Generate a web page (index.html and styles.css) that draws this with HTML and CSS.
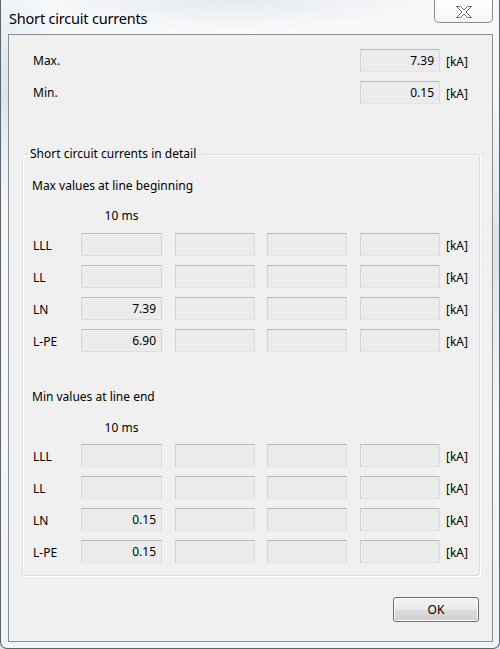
FILE: index.html
```html
<!DOCTYPE html>
<html>
<head>
<meta charset="utf-8">
<link rel="stylesheet" href="styles.css">
</head>
<body>
<div class="window">
  <div class="titlebar">
    <span class="title">Short circuit currents</span>
    <button class="close" aria-label="Close">
      <svg width="18" height="12" viewBox="0 0 18 12">
        <path d="M1.5 0.5 H5.5 L9 4 L12.5 0.5 H16.5 L11 6 L16.5 11.5 H12.5 L9 8 L5.5 11.5 H1.5 L7 6 Z" fill="#ffffff" stroke="#6a6a6a" stroke-width="1" stroke-linejoin="round"/>
      </svg>
    </button>
  </div>
  <div class="client">
    <div class="summary">
      <div class="srow">
        <span class="slabel">Max.</span>
        <span class="box">7.39</span>
        <span class="unit">[kA]</span>
      </div>
      <div class="srow">
        <span class="slabel">Min.</span>
        <span class="box">0.15</span>
        <span class="unit">[kA]</span>
      </div>
    </div>

    <fieldset class="group">
      <legend>Short circuit currents in detail</legend>

      <div class="section">
        <div class="heading">Max values at line beginning</div>
        <div class="colhead">10 ms</div>
        <div class="grid">
          <span class="rlabel">LLL</span>
          <span class="box w81 blue"></span><span class="box"></span><span class="box"></span><span class="box"></span>
          <span class="unit">[kA]</span>

          <span class="rlabel">LL</span>
          <span class="box w81 blue"></span><span class="box"></span><span class="box"></span><span class="box"></span>
          <span class="unit">[kA]</span>

          <span class="rlabel">LN</span>
          <span class="box w81 blue">7.39</span><span class="box"></span><span class="box"></span><span class="box"></span>
          <span class="unit">[kA]</span>

          <span class="rlabel">L-PE</span>
          <span class="box w81 blue">6.90</span><span class="box"></span><span class="box"></span><span class="box"></span>
          <span class="unit">[kA]</span>
        </div>
      </div>

      <div class="section second">
        <div class="heading">Min values at line end</div>
        <div class="colhead">10 ms</div>
        <div class="grid">
          <span class="rlabel">LLL</span>
          <span class="box w81"></span><span class="box"></span><span class="box"></span><span class="box"></span>
          <span class="unit">[kA]</span>

          <span class="rlabel">LL</span>
          <span class="box w81"></span><span class="box"></span><span class="box"></span><span class="box"></span>
          <span class="unit">[kA]</span>

          <span class="rlabel">LN</span>
          <span class="box w81">0.15</span><span class="box"></span><span class="box"></span><span class="box"></span>
          <span class="unit">[kA]</span>

          <span class="rlabel">L-PE</span>
          <span class="box w81">0.15</span><span class="box"></span><span class="box"></span><span class="box"></span>
          <span class="unit">[kA]</span>
        </div>
      </div>
    </fieldset>

    <div class="buttons">
      <button class="ok">OK</button>
    </div>
  </div>
</div>
</body>
</html>
```

FILE: styles.css
```css
* { box-sizing: border-box; }

html, body {
  margin: 0;
  padding: 0;
  width: 500px;
  height: 649px;
  overflow: hidden;
  background: #dfe6ee;
}

body {
  font-family: "Noto Sans", "Open Sans", sans-serif;
  font-size: 12px;
  color: #000;
}

.window {
  width: 500px;
  height: 649px;
  border: 1px solid #5e6468;
  border-top: none;
  border-radius: 0 0 7px 7px;
  background:
    radial-gradient(ellipse 60px 120px at 0px 90px, rgba(160, 190, 220, 0.35), transparent),
    radial-gradient(ellipse 60px 160px at 500px 250px, rgba(160, 190, 220, 0.35), transparent),
    radial-gradient(ellipse 200px 30px at 230px 0px, rgba(200, 205, 210, 0.35), transparent),
    linear-gradient(#f7f9fb, #f1f4f7);
  display: flex;
  flex-direction: column;
  padding: 0 6px 6px 7px;
}

.titlebar {
  height: 34px;
  display: flex;
  align-items: flex-start;
  justify-content: space-between;
  flex: none;
}

.title {
  font-size: 14.5px;
  line-height: 18px;
  margin-top: 9px;
  margin-left: 1px;
  color: #000;
  letter-spacing: -0.2px;
}

.close {
  width: 59px;
  height: 23px;
  margin: 0;
  padding: 0;
  border: 1px solid #8d8f92;
  border-top: none;
  border-radius: 0 0 5px 5px;
  background: linear-gradient(#ffffff, #f3f5f7);
  display: flex;
  align-items: center;
  justify-content: center;
  padding-top: 1px;
}

.client {
  flex: 1;
  border: 1px solid #8a8d90;
  background: #f0f0f0;
  display: flex;
  flex-direction: column;
  padding: 14px 0 0 0;
}

.summary {
  display: flex;
  flex-direction: column;
  gap: 9px;
  padding-left: 24px;
}

.srow {
  display: flex;
  align-items: center;
  height: 23px;
}

.slabel {
  width: 327px;
}

.box {
  display: block;
  width: 80px;
  height: 23px;
  background: #ebebeb;
  border: 1px solid;
  border-color: #b9b9b9 #dadada #e4e4e4 #d3d3d3;
  text-align: right;
  padding-right: 5px;
  line-height: 21px;
  font-size: 12px;
}

.box.w81 { width: 81px; }

.box.blue {
  border-color: #aebfd0 #c9d6e3 #d6e0ea #c9d6e3;
}

.unit {
  margin-left: 6px;
  line-height: 23px;
  padding-top: 2px;
}

.group {
  margin: 42px 0 0 13px;
  width: 458px;
  border: 1px solid #d5dfe5;
  border-radius: 3px;
  box-shadow: inset 1px 1px 0 #ffffff, 1px 1px 0 #ffffff;
  padding: 0 0 12px 9px;
  min-width: 0;
}

.group legend {
  padding: 0 2px;
  margin-left: -4px;
  line-height: 16px;
}

.section {
  display: flex;
  flex-direction: column;
}

.heading {
  margin-top: 16px;
  line-height: 16px;
}

.section.second .heading {
  margin-top: 37px;
}

.colhead {
  margin-top: 14px;
  margin-left: 49px;
  width: 81px;
  text-align: center;
  line-height: 16px;
}

.section.second .colhead {
  margin-top: 15px;
}

.grid {
  display: grid;
  grid-template-columns: 49px 94px 92px 93px 86px auto;
  grid-auto-rows: 23px;
  row-gap: 9px;
  margin-top: 9px;
  align-items: center;
}

.section.second .grid {
  margin-top: 8px;
}

.rlabel {
  padding-left: 1px;
  padding-top: 1px;
}

.grid .unit {
  margin-left: 0;
}

.buttons {
  display: flex;
  justify-content: flex-end;
  padding: 21px 13px 0 0;
}

.ok {
  width: 86px;
  height: 25px;
  margin: 0;
  border: 1px solid #707070;
  border-radius: 3px;
  background: linear-gradient(#f2f2f2 0%, #ebebeb 48%, #dddddd 52%, #cfcfcf 100%);
  box-shadow: inset 0 0 0 1px #fcfcfc;
  font-family: "Noto Sans", "Open Sans", sans-serif;
  font-size: 12px;
  color: #000;
  padding: 0;
}
```
